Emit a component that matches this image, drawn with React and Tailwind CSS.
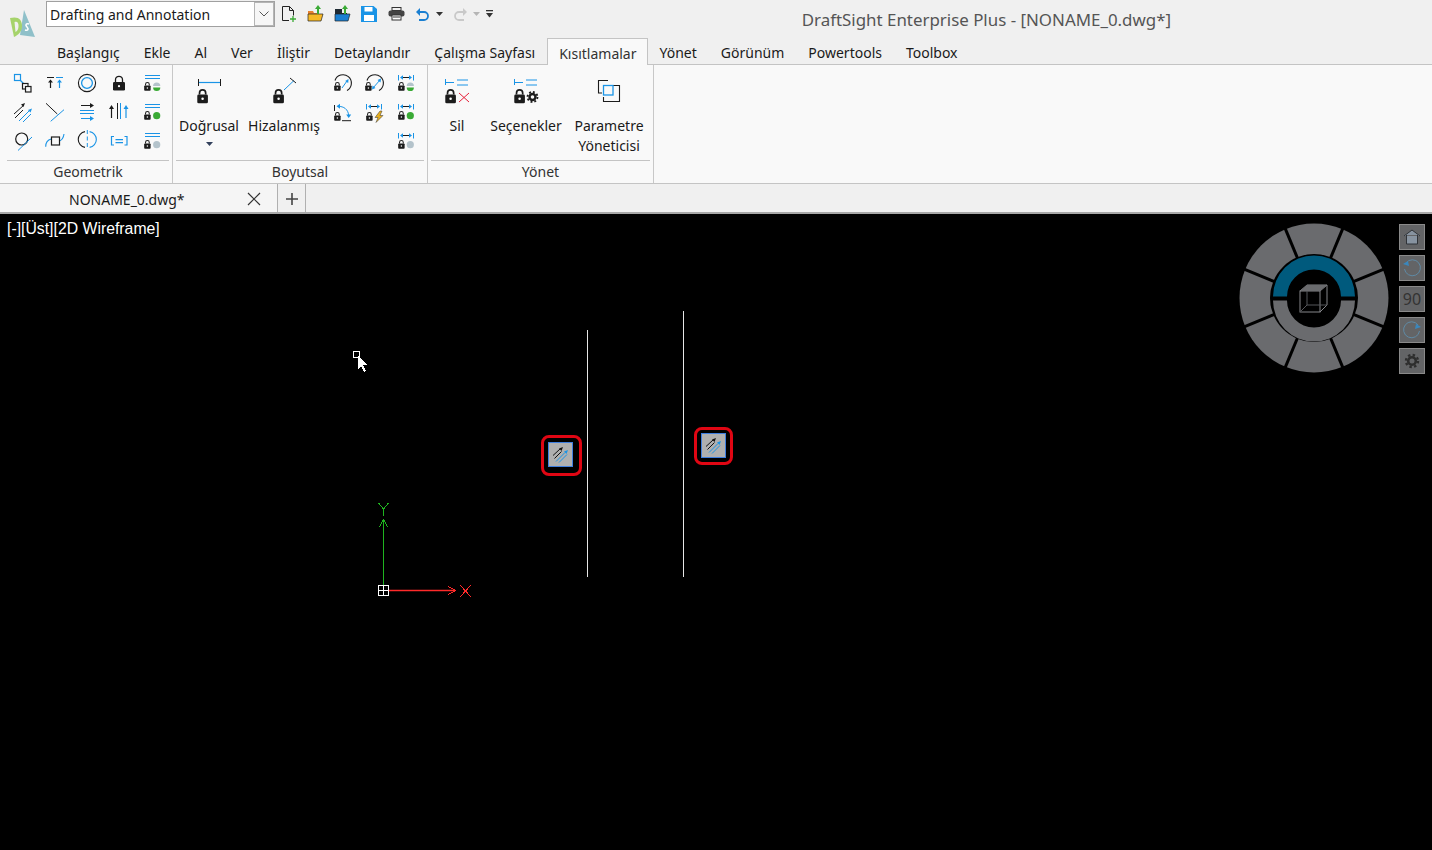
const BLUE = "#1a94e6";
const INK = "#1c1c1c";
const GREEN = "#3aaa35";

const uiFont = { fontFamily: "'Noto Sans', sans-serif" };

// small padlock, drawn at x,y in the parent svg
const Padlock = ({ x = 0, y = 0, s = 0.85 }) => (
  <g transform={`translate(${x} ${y}) scale(${s})`}>
    <path d="M1.8 4V2.8a2.2 2.2 0 0 1 4.4 0V4" fill="none" stroke={INK} strokeWidth="1.2" />
    <rect x="0.2" y="4" width="7.6" height="6.2" rx="1" fill={INK} />
    <circle cx="4" cy="7" r="0.9" fill="#fff" />
  </g>
);

const Status = ({ kind, x, y }) => {
  if (kind === "half")
    return (
      <g>
        <path d={`M${x - 3.6} ${y - 0.7}a3.6 3.6 0 0 1 7.2 0z`} fill="#b4c3cb" />
        <path d={`M${x - 3.6} ${y + 0.7}a3.6 3.6 0 0 0 7.2 0z`} fill={GREEN} />
      </g>
    );
  return <circle cx={x} cy={y} r="3.6" fill={kind === "green" ? GREEN : "#b4c3cb"} />;
};

const Ico = ({ children, w = 30, h = 28 }) => (
  <svg width={w} height={h} viewBox={`0 0 ${w} ${h}`} fill="none" strokeWidth="1">
    {children}
  </svg>
);

const LockStatus = ({ kind }) => (
  <Ico>
    <path d="M9 6.5h15M9 9.5h15" stroke={BLUE} />
    <Padlock x={8} y={13} />
    <Status kind={kind} x={20.7} y={17.7} />
  </Ico>
);

const DimTop = () => (
  <>
    <path d="M7.5 6v5.5M22.5 6v5.5" stroke={BLUE} />
    <path d="M10 8.5h10" stroke={INK} />
    <path d="M9 8.5l3-2.2v4.4zM21 8.5l-3-2.2v4.4z" fill={BLUE} />
  </>
);

const DimStatus = ({ kind }) => (
  <Ico>
    <DimTop />
    <Padlock x={7} y={13} />
    <Status kind={kind} x={19.3} y={17.7} />
  </Ico>
);

const geo = [
  <Ico>
    <rect x="6.5" y="5.5" width="6" height="6" stroke={BLUE} strokeWidth="1.2" />
    <path d="M12.5 11.5l3 3" stroke={BLUE} strokeWidth="1.3" />
    <rect x="14.5" y="14.5" width="5.5" height="5.5" stroke={INK} strokeWidth="1.2" />
    <rect x="17.5" y="17.5" width="5.5" height="5.5" fill="#f9f9f9" stroke={INK} strokeWidth="1.2" />
  </Ico>,
  <Ico>
    <path d="M7 8.5h7" stroke={INK} />
    <path d="M16 8.5h7" stroke={BLUE} />
    <path d="M10.5 19v-7" stroke={INK} strokeWidth="1.2" />
    <path d="M8 13.5l2.5-3 2.5 3z" fill={INK} />
    <path d="M19.5 19v-7" stroke={BLUE} strokeWidth="1.2" />
    <path d="M17 13.5l2.5-3 2.5 3z" fill={BLUE} />
  </Ico>,
  <Ico>
    <circle cx="15" cy="14" r="8.6" stroke={INK} strokeWidth="1.1" />
    <circle cx="15" cy="14" r="5.4" stroke={BLUE} strokeWidth="1.3" />
  </Ico>,
  <Ico>
    <g transform="translate(9 7)">
      <path d="M2.5 6V3.8a3.5 3.5 0 0 1 7 0V6" stroke={INK} strokeWidth="1.3" />
      <rect x="0" y="6" width="12" height="8.5" rx="1.3" fill={INK} />
      <circle cx="6" cy="10.2" r="1.1" fill="#fff" />
    </g>
  </Ico>,
  <LockStatus kind="half" />,
  <Ico>
    <path d="M6 16L16 7" stroke={INK} />
    <path d="M7 20L15 12" stroke={INK} />
    <path d="M13 6.5l4-1.5-1.5 4z" fill={INK} />
    <path d="M11 23l11-11" stroke={BLUE} />
    <path d="M15 24l8-8" stroke={BLUE} />
    <path d="M20 12l4-1.5-1.5 4z" fill={BLUE} />
  </Ico>,
  <Ico>
    <path d="M6 5.3l11.3 10.7" stroke={INK} />
    <path d="M10.7 23.3L24 11.7" stroke={BLUE} />
  </Ico>,
  <Ico>
    <path d="M9 7.5h11" stroke={INK} />
    <path d="M18 5l4 2.5-4 2.5z" fill={INK} />
    <path d="M8 12.5h14M8 15.5h14" stroke={BLUE} />
    <path d="M9 20.5h11" stroke={BLUE} />
    <path d="M18 18l4 2.5-4 2.5z" fill={BLUE} />
  </Ico>,
  <Ico>
    <path d="M7.5 20V9" stroke={INK} strokeWidth="1.2" />
    <path d="M5 11l2.5-4 2.5 4z" fill={INK} />
    <path d="M13.5 5v16" stroke={INK} />
    <path d="M16.5 5v16" stroke={BLUE} />
    <path d="M22 20V9" stroke={BLUE} strokeWidth="1.2" />
    <path d="M19.5 11l2.5-4 2.5 4z" fill={BLUE} />
  </Ico>,
  <LockStatus kind="green" />,
  <Ico>
    <circle cx="13.7" cy="12" r="6" stroke={INK} strokeWidth="1.2" />
    <path d="M10 23.5L24 10" stroke={BLUE} />
  </Ico>,
  <Ico>
    <path d="M5.7 19.7c0-5 2.5-7 5.5-7.7M19.5 14c2.5-1 4-3.5 4.5-7" stroke={BLUE} strokeWidth="1.1" />
    <rect x="11.5" y="10" width="8" height="8" stroke={INK} strokeWidth="1.2" />
  </Ico>,
  <Ico>
    <path d="M13 4.6A8 8 0 0 0 13 20.4" stroke={INK} strokeWidth="1.1" />
    <path d="M17.6 4.6A8 8 0 0 1 17.6 20.4" stroke={BLUE} strokeWidth="1.1" />
    <path d="M15.3 3v19" stroke={BLUE} strokeDasharray="4 2.5" />
  </Ico>,
  <Ico>
    <path d="M10 9.500H7.500v8.500H10M20.500 9.500H23v8.500h-2.500" stroke={BLUE} strokeWidth="1.2" />
    <path d="M11.500 12.700h7.500M11.500 15.700h7.500" stroke={BLUE} strokeWidth="1.2" />
  </Ico>,
  <LockStatus kind="grey" />,
];

const dimSmall = [
  <Ico>
    <Padlock x={7} y={13} />
    <path d="M8 11.5A8.4 8.4 0 1 1 20 21.5" stroke={INK} strokeWidth="1.1" />
    <path d="M15 19l5-7" stroke={BLUE} />
    <path d="M21.5 10l-.3 4-3-2z" fill={BLUE} />
  </Ico>,
  <Ico>
    <Padlock x={6} y={13} />
    <path d="M8 11.5A8.4 8.4 0 1 1 20 21.5" stroke={INK} strokeWidth="1.1" />
    <path d="M14 19l7-8" stroke={BLUE} />
    <path d="M22 9.5l-.5 4-3-2.5zM13 20.5l.5-4 3 2.5z" fill={BLUE} />
  </Ico>,
  <DimStatus kind="half" />,
  <Ico>
    <path d="M7.5 7v6" stroke={INK} />
    <Padlock x={7} y={14} />
    <path d="M15 22.7h9" stroke={INK} />
    <path d="M11 8.3c6 0 10 3 10.7 9" stroke={BLUE} />
    <path d="M9.5 8.3l3.5-2.5v5zM21.7 20l-2.5-3.5h5z" fill={BLUE} />
  </Ico>,
  <Ico>
    <DimTop />
    <Padlock x={7} y={14} />
    <path d="M21 13l-5 6.5h3l-2 5 7-7h-3l2-4.5z" fill="#e8b020" stroke="#333" strokeWidth="0.5" />
  </Ico>,
  <DimStatus kind="green" />,
  null,
  null,
  <DimStatus kind="grey" />,
];

const Linear = () => (
  <svg width="36" height="38" viewBox="0 0 36 38" fill="none">
    <path d="M7.5 6v7M29.5 6v7" stroke={INK} />
    <path d="M8 9.5h21" stroke={BLUE} strokeWidth="1.2" />
    <Padlock x={6} y={16} s={1.4} />
  </svg>
);

const Aligned = () => (
  <svg width="36" height="38" viewBox="0 0 36 38" fill="none">
    <path d="M18 17L28 7.5" stroke={BLUE} />
    <path d="M24 5l6 5" stroke={INK} />
    <Padlock x={7} y={16} s={1.4} />
  </svg>
);

const Del = () => (
  <svg width="36" height="38" viewBox="0 0 36 38" fill="none">
    <path d="M6.5 6v6M7 9.5h8" stroke={BLUE} />
    <path d="M18 7h11M18 12h11" stroke={BLUE} />
    <Padlock x={6} y={16} s={1.4} />
    <path d="M20 20l10 9M30 20l-10 9" stroke="#e5203a" />
  </svg>
);

const Opts = () => (
  <svg width="36" height="38" viewBox="0 0 36 38" fill="none">
    <path d="M6.5 6v6M7 9.5h8" stroke={BLUE} />
    <path d="M18 7h11M18 12h11" stroke={BLUE} />
    <Padlock x={6} y={16} s={1.4} />
    <circle cx="24.5" cy="24" r="3" stroke={INK} strokeWidth="2.4" />
    <circle cx="24.5" cy="24" r="5" stroke={INK} strokeWidth="1.8" strokeDasharray="1.9 2" />
  </svg>
);

const ParamMgr = () => (
  <svg width="36" height="38" viewBox="0 0 36 38" fill="none">
    <path d="M17 7.5H7.5V20H11" stroke={INK} strokeWidth="1.1" />
    <path d="M22 12.5h6.5v16H12.5V24" stroke={INK} strokeWidth="1.1" />
    <rect x="12.5" y="12.5" width="9.5" height="9.5" stroke={BLUE} strokeWidth="1.3" />
  </svg>
);

const GroupFoot = ({ children }) => (
  <div className="mx-[3px] h-[23px] border-t border-[#c4c4c4] text-center text-[14px] leading-[21px] text-[#333]">
    {children}
  </div>
);

const BigBtn = ({ icon, children, w }) => (
  <div className={`flex flex-col items-center ${w}`}>
    <div className="flex h-[41px] items-start justify-center">{icon}</div>
    <div className="mt-[2px] text-center text-[14px] leading-[20px] whitespace-nowrap text-[#1a1a1a]">{children}</div>
  </div>
);

const Logo = () => (
  <svg width="30" height="30" viewBox="0 0 30 30" fill="none">
    <path d="M17 1l11 27-15-2z" fill="#8fc0c9" />
    <path d="M3 9c8-2 12 1 12 8 0 6-4 9-8 11z" fill="#a6d36b" />
    <path d="M7.5 13c3-1 4 1 4 4s-1 5-3 6z" fill="#f0f0f0" />
    <path d="M22 15c-3-1-4 1-2 3s1 4-2 3" stroke="#fff" strokeWidth="1.6" />
  </svg>
);

const Caret = ({ color = "#333" }) => (
  <svg width="7" height="4" viewBox="0 0 7 4">
    <path d="M0 0h7L3.5 4z" fill={color} />
  </svg>
);

const QuickBar = () => (
  <div className="ml-[6px] flex h-[28px] items-center">
    <svg width="16" height="18" viewBox="0 0 16 18" fill="none">
      <path d="M1.5 1.5h7l4 4v5M12.5 5.5h-4v-4M1.5 1.5v14H8" stroke="#222" />
      <path d="M12 11v6M9 14h6" stroke={GREEN} strokeWidth="1.3" />
    </svg>
    <svg width="18" height="18" viewBox="0 0 18 18" className="ml-[10px]">
      <path d="M1 6h5l1 2h5v2H1z" fill="#e8812e" />
      <path d="M1 9h15l-2 7H1z" fill="#f7b926" stroke="#222" strokeWidth="0.7" />
      <path d="M10 9V4h-2l3-4 3 4h-2v5z" fill={GREEN} />
    </svg>
    <svg width="18" height="18" viewBox="0 0 18 18" className="ml-[9px]">
      <path d="M1 4h7v4h5v3H1z" fill="#1f2a33" />
      <path d="M1 9h15l-2 7H1z" fill="#1a7fd1" stroke="#222" strokeWidth="0.7" />
      <path d="M10 9V4h-2l3-4 3 4h-2v5z" fill={GREEN} />
    </svg>
    <svg width="16" height="16" viewBox="0 0 16 16" className="ml-[9px]">
      <path d="M0 0h12.5L16 3v13H0z" fill="#1a94e6" />
      <rect x="3.5" y="1" width="8" height="4.5" fill="#fff" />
      <rect x="3" y="9" width="10" height="6" fill="#fff" />
    </svg>
    <svg width="17" height="14" viewBox="0 0 17 14" fill="none" className="ml-[11px]">
      <rect x="4" y="0.5" width="9" height="3" stroke="#333" />
      <rect x="0.5" y="3.5" width="16" height="6" rx="2" fill="#444" />
      <rect x="4" y="8" width="9" height="5" fill="#fff" stroke="#333" />
      <path d="M5 10h7" stroke="#333" />
    </svg>
    <svg width="14" height="15" viewBox="0 0 14 15" fill="none" className="ml-[11px]">
      <path d="M0 5l4-4v8z" fill="#1a7fd1" />
      <path d="M3 5h5a4 4 0 0 1 0 8H3" stroke="#1a7fd1" strokeWidth="1.8" />
    </svg>
    <div className="ml-[6px]"><Caret /></div>
    <svg width="14" height="15" viewBox="0 0 14 15" fill="none" className="ml-[10px]">
      <path d="M14 5l-4-4v8z" fill="#c9c9c9" />
      <path d="M11 5H6a4 4 0 0 0 0 8h5" stroke="#c9c9c9" strokeWidth="1.8" />
    </svg>
    <div className="ml-[6px]"><Caret color="#b5b5b5" /></div>
    <svg width="7" height="8" viewBox="0 0 7 8" className="ml-[6px]">
      <path d="M0 0h7v1.3H0z" fill="#333" />
      <path d="M0 3h7L3.5 7.5z" fill="#333" />
    </svg>
  </div>
);

const tabs = ["Başlangıç", "Ekle", "Al", "Ver", "İliştir", "Detaylandır", "Çalışma Sayfası", "Kısıtlamalar", "Yönet", "Görünüm", "Powertools", "Toolbox"];

const Ribbon = () => (
  <div className="flex h-[119px] border-b border-[#c4c4c4] bg-[#f9f9f9]">
    <div className="flex w-[173px] flex-col border-r border-[#c8c8c8] pl-[4px]">
      <div className="grid h-[95px] grid-cols-[repeat(5,32px)] grid-rows-[repeat(3,29px)] pt-[3px] pl-[3px]">
        {geo.map((g, i) => (
          <div key={i} className="flex items-center justify-center">{g}</div>
        ))}
      </div>
      <GroupFoot>Geometrik</GroupFoot>
    </div>
    <div className="flex w-[255px] flex-col border-r border-[#c8c8c8]">
      <div className="flex h-[95px]">
        <div className="flex pt-[8px]">
          <BigBtn icon={<Linear />} w="w-[72px]">
            <div>Doğrusal</div>
            <div className="mt-[6px] flex justify-center"><Caret color="#33415c" /></div>
          </BigBtn>
          <BigBtn icon={<Aligned />} w="w-[78px]">Hizalanmış</BigBtn>
        </div>
        <div className="grid grid-cols-[repeat(3,32px)] grid-rows-[repeat(3,29px)] pt-[3px] pl-[3px]">
          {dimSmall.map((g, i) => (
            <div key={i} className="flex items-center justify-center">{g}</div>
          ))}
        </div>
      </div>
      <GroupFoot>Boyutsal</GroupFoot>
    </div>
    <div className="flex w-[226px] flex-col border-r border-[#c8c8c8]">
      <div className="flex h-[95px] pt-[8px] pl-[8px]">
        <BigBtn icon={<Del />} w="w-[42px]">Sil</BigBtn>
        <BigBtn icon={<Opts />} w="w-[96px]">Seçenekler</BigBtn>
        <BigBtn icon={<ParamMgr />} w="w-[70px]">
          <div>Parametre</div>
          <div>Yöneticisi</div>
        </BigBtn>
      </div>
      <GroupFoot>Yönet</GroupFoot>
    </div>
  </div>
);

const Wheel = () => {
  const c = 76;
  const spokes = [22.5, 67.5, 112.5, 157.5, 202.5, 247.5, 292.5, 337.5];
  return (
    <svg width="152" height="152" viewBox="0 0 152 152">
      <circle cx={c} cy={c} r="74.5" fill="#6a6b6e" />
      <circle cx={c} cy={c} r="44" fill="#000" />
      {spokes.map((a) => {
        const r = (a * Math.PI) / 180;
        return (
          <line
            key={a}
            x1={c + 40 * Math.cos(r)}
            y1={c + 40 * Math.sin(r)}
            x2={c + 77 * Math.cos(r)}
            y2={c + 77 * Math.sin(r)}
            stroke="#000"
            strokeWidth="3"
          />
        );
      })}
      <path d={`M${c - 41} ${c - 1.5}a41 41 0 0 1 82 0h-14a27 27 0 0 0 -54 0z`} fill="#005a7d" />
      <path d={`M${c - 41} ${c + 2.5}a41 41 0 0 0 82 0h-14a27 27 0 0 1 -54 0z`} fill="#6a6b6e" />
      <g fill="none" strokeWidth="1">
        <rect x={c - 14} y={c - 7} width="20" height="21" stroke="#85868a" />
        <path d={`M${c - 14} ${c - 7}l7 -6h20l-7 6M${c + 13} ${c - 13}v20l-7 7`} stroke="#85868a" />
        <path d={`M${c - 7} ${c - 13}v20h20M${c - 7} ${c + 7}l-7 7`} stroke="#55565a" />
      </g>
      <path d={`M${c - 14} ${c - 7}l7 -6h20l-7 6z`} fill="#6a6b6e" />
    </svg>
  );
};

const NavBtn = ({ children }) => (
  <div className="flex h-[26px] w-[26px] items-center justify-center border border-[#8a8a8a] bg-[#636466] text-[16px] leading-none text-[#333]" style={uiFont}>
    {children}
  </div>
);

const ConstraintMark = ({ className, inner }) => (
  <div className={`absolute flex items-center justify-center rounded-[8px] border-[3px] border-[#e00613] ${className}`}>
    <div className={`flex items-center justify-center border border-[#3f7fe0] bg-[#b0b0b0] ${inner}`}>
      <svg width="17" height="17" viewBox="0 0 17 17" fill="none" strokeWidth="1">
        <path d="M1 9.500L8 3M2.500 12.500l7-7" stroke="#111" />
        <path d="M7 2.500L11 1 9.500 5z" fill="#111" />
        <path d="M4 15.500L13 6.500M7 16.500l8-8" stroke="#1a94e6" />
        <path d="M12 5.500l4-1.500-1.500 4z" fill="#1a94e6" />
      </svg>
    </div>
  </div>
);

const Canvas = () => (
  <div className="relative flex-1 overflow-hidden bg-black">
    <div className="absolute top-[5px] left-[7px] text-[15.8px] leading-[20px] text-white" style={{ fontFamily: "'Liberation Sans', sans-serif" }}>
      [-][Üst][2D Wireframe]
    </div>
    {/* drawing: offsets are page y minus 214 */}
    <svg className="absolute top-0 left-0" width="1432" height="636" viewBox="0 0 1432 636" fill="none" shapeRendering="crispEdges">
      <path d="M587.5 116v247M683.5 97v266" stroke="#e6e6e6" />
      <rect x="353.5" y="137.5" width="6" height="6" stroke="#fff" />
      <path d="M358 142v13l3-3 3 6 2-1-3-6h4z" fill="#fff" />
      <rect x="378.5" y="371.5" width="10" height="10" stroke="#fff" />
      <path d="M383.5 371.5v10M378.5 376.5h10" stroke="#fff" />
      <path d="M383.5 371V305" stroke="#1fb31f" />
      <path d="M383.5 305l-4 8M383.5 305l4 8" stroke="#1fb31f" />
      <path d="M383.5 301.5V295M383.5 295l-5-6M383.5 295l5-6" stroke="#1fb31f" />
      <path d="M389 376.5h66" stroke="#ff2a2a" shapeRendering="auto" strokeWidth="1.4" />
      <path d="M456 376.5l-8-4M456 376.5l-8 4" stroke="#ff2a2a" />
      <path d="M460 371l11 12M471 371l-11 12" stroke="#ff2a2a" />
    </svg>
    <ConstraintMark className="top-[221px] left-[541px] h-[41px] w-[41px] pr-[3px] pb-[2px]" inner="h-[25px] w-[25px]" />
    <ConstraintMark className="top-[213px] left-[694px] h-[38px] w-[39px] pr-[1px] pb-[2px]" inner="h-[25px] w-[25px]" />
    <div className="absolute top-[8px] left-[1238px]"><Wheel /></div>
    <div className="absolute top-[10px] left-[1399px] flex flex-col gap-[5px]">
      <NavBtn>
        <svg width="18" height="16" viewBox="0 0 18 16">
          <path d="M1 7l8-6 8 6M3.5 6v9h11V6" fill="#8793a0" stroke="#2f3338" />
        </svg>
      </NavBtn>
      <NavBtn>
        <svg width="20" height="20" viewBox="0 0 20 20" fill="none">
          <path d="M4 5a8 8 0 1 1-1.5 6" stroke="#5f8aa5" />
          <path d="M1 6l5-3 1 5z" fill="#3a87bd" />
        </svg>
      </NavBtn>
      <NavBtn>90</NavBtn>
      <NavBtn>
        <svg width="20" height="20" viewBox="0 0 20 20" fill="none">
          <path d="M16 5a8 8 0 1 0 1.5 6" stroke="#5f8aa5" />
          <path d="M19 7l-5-3-1 5z" fill="#3a87bd" />
        </svg>
      </NavBtn>
      <NavBtn>
        <svg width="16" height="16" viewBox="0 0 16 16" fill="none">
          <circle cx="8" cy="8" r="3.8" stroke="#2e2e2e" strokeWidth="2.6" />
          <circle cx="8" cy="8" r="6" stroke="#2e2e2e" strokeWidth="2.4" strokeDasharray="2.4 2.3" />
        </svg>
      </NavBtn>
    </div>
  </div>
);

export default function App() {
  return (
    <div className="flex h-[850px] w-[1432px] flex-col overflow-hidden bg-black" style={uiFont}>
      <div className="h-[65px] border-b border-[#c4c4c4] bg-[#f0f0f0]">
        <div className="flex h-[38px]">
          <div className="ml-[7px] mt-[9px] h-[30px] w-[33px]"><Logo /></div>
          <div className="mt-[1px] ml-[6px] flex h-[26px] w-[229px] items-center justify-between border border-[#a0a0a0] bg-white pl-[3px] text-[14px] text-[#1a1a1a]">
            Drafting and Annotation
            <div className="flex h-[24px] w-[20px] items-center justify-center border border-[#b4b4b4] bg-[#f6f6f6]">
              <svg width="10" height="6" viewBox="0 0 10 6" fill="none">
                <path d="M0.5 0.5L5 5l4.5-4.5" stroke="#555" />
              </svg>
            </div>
          </div>
          <QuickBar />
          <div className="ml-auto mr-[261px] mt-[8px] text-[16.9px] leading-[24px] whitespace-nowrap text-[#555]">
            DraftSight Enterprise Plus - [NONAME_0.dwg*]
          </div>
        </div>
        <div className="ml-[45px] flex h-[27px] text-[14px]">
          {tabs.map((t) =>
            t === "Kısıtlamalar" ? (
              <div key={t} className="relative z-10 flex h-[27px] items-center border border-b-0 border-[#c4c4c4] bg-[#f9f9f9] pt-[2px] pr-[10px] pl-[11px] text-[#333]">
                {t}
              </div>
            ) : (
              <div key={t} className="flex h-[27px] items-center px-3 pt-[2px] text-[#1a1a1a]">{t}</div>
            )
          )}
        </div>
      </div>
      <Ribbon />
      <div className="flex h-[30px] border-b-2 border-[#a8a8a8] bg-[#f0f0f0]">
        <div className="flex h-[28px] w-[278px] items-center border-r border-[#b0b0b0] bg-[#f5f5f5] pt-[2px]">
          <span className="ml-[69px] text-[14px] text-[#1a1a1a]">NONAME_0.dwg*</span>
          <svg width="14" height="14" viewBox="0 0 14 14" className="ml-auto mr-[16px]" fill="none">
            <path d="M1 1l12 12M13 1L1 13" stroke="#333" strokeWidth="1.2" />
          </svg>
        </div>
        <div className="flex h-[28px] w-[28px] items-center justify-center border-r border-[#b0b0b0] pt-[2px]">
          <svg width="14" height="14" viewBox="0 0 14 14" fill="none">
            <path d="M7 1v12M1 7h12" stroke="#444" strokeWidth="1.6" />
          </svg>
        </div>
      </div>
      <Canvas />
    </div>
  );
}
